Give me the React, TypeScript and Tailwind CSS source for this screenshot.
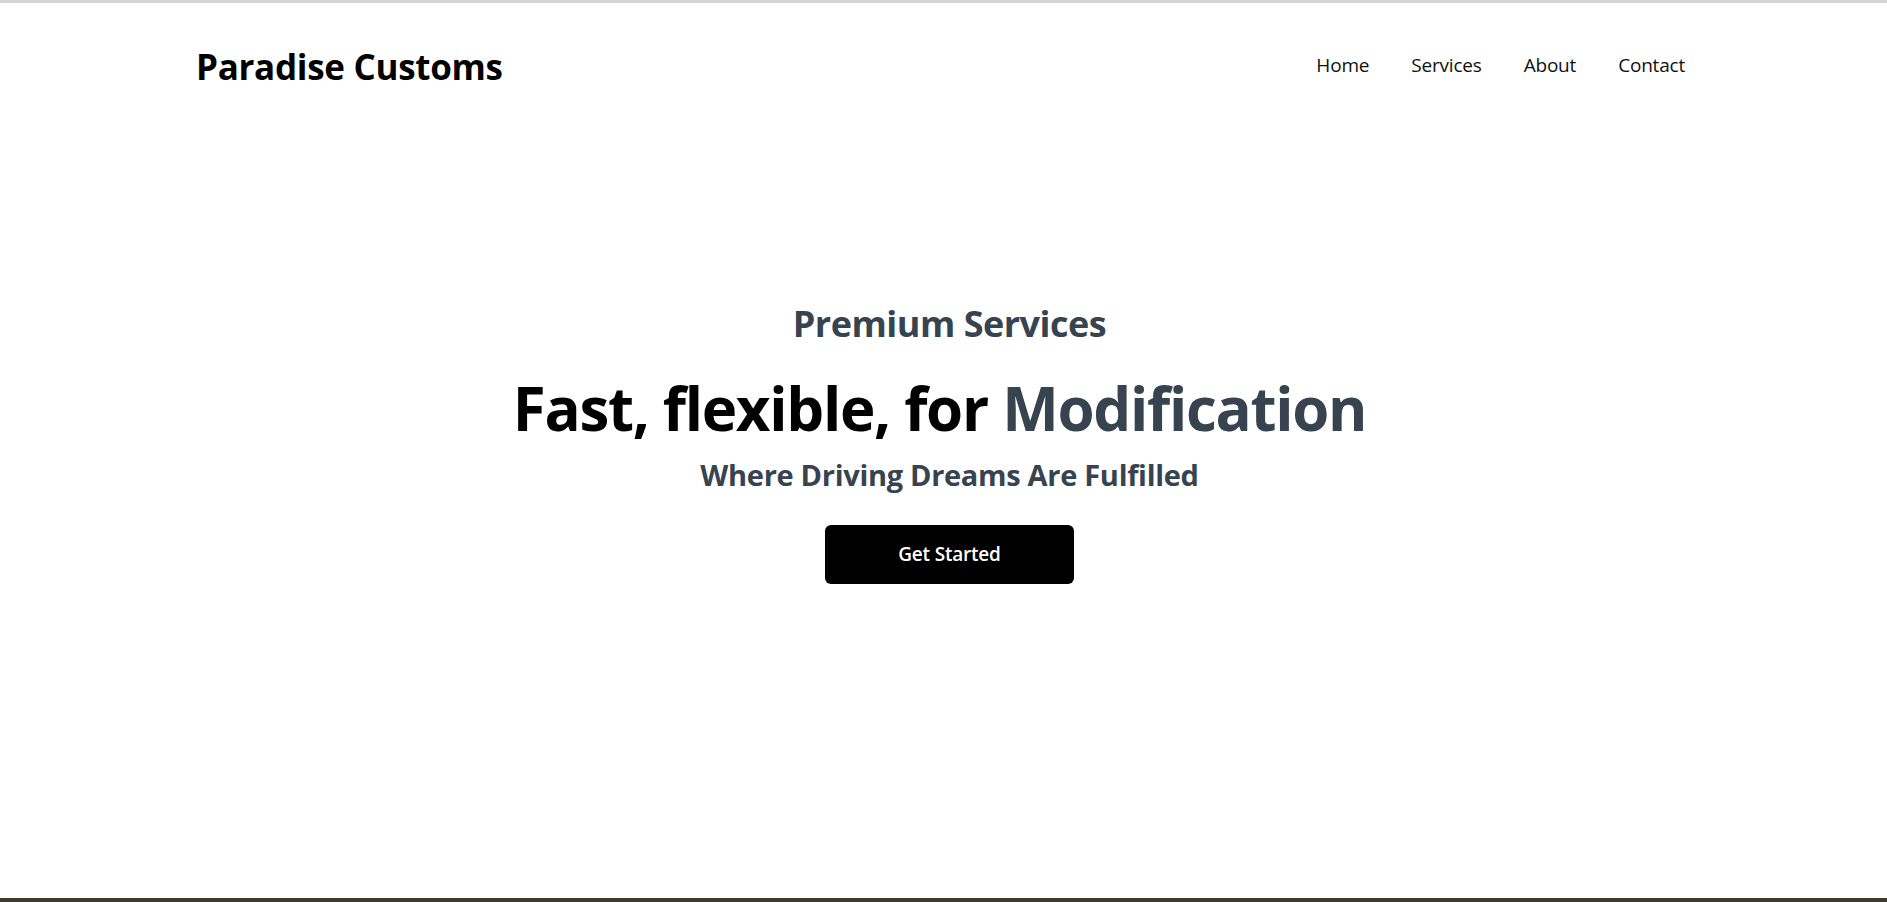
const navLinks = ['Home', 'Services', 'About', 'Contact'];

const App = () => {
  return (
    <div
      className="min-h-[902px] flex flex-col bg-white border-t-[3px] border-[#d4d4d4]"
      style={{ fontFamily: '"Open Sans", "Noto Sans", sans-serif' }}
    >
      <header className="flex items-center justify-between pl-[196px] pr-[202px] pt-[42px]">
        <h1 className="text-[35px] font-bold text-black tracking-[-0.3px] leading-tight">Paradise Customs</h1>
        <nav className="flex items-center gap-[42px] text-[19px] text-[#111] -mt-[4px]">
          {navLinks.map((link) => (
            <a key={link} href="#" className="tracking-[-0.2px]">
              {link}
            </a>
          ))}
        </nav>
      </header>

      <main className="flex-1 flex flex-col items-center pt-[212px] pl-[12px]">
        <h2 className="text-[36px] font-bold text-[#37434f] tracking-[-0.5px] leading-tight">
          Premium Services
        </h2>
        <h3 className="mt-[25px] mr-[20px] text-[60px] font-bold text-black tracking-[-1.3px] leading-tight">
          Fast, flexible, for <span className="text-[#37434f]">Modification</span>
        </h3>
        <p className="mt-[11px] text-[29px] font-bold text-[#37434f] tracking-[-0.3px] leading-tight">
          Where Driving Dreams Are Fulfilled
        </p>
        <button className="mt-[32px] w-[249px] h-[59px] rounded-md bg-black text-white text-[19px] font-semibold tracking-[-0.2px]">
          Get Started
        </button>
      </main>

      <div className="h-[4px] bg-[#3b3a2c]" />
    </div>
  );
};

export default App;
